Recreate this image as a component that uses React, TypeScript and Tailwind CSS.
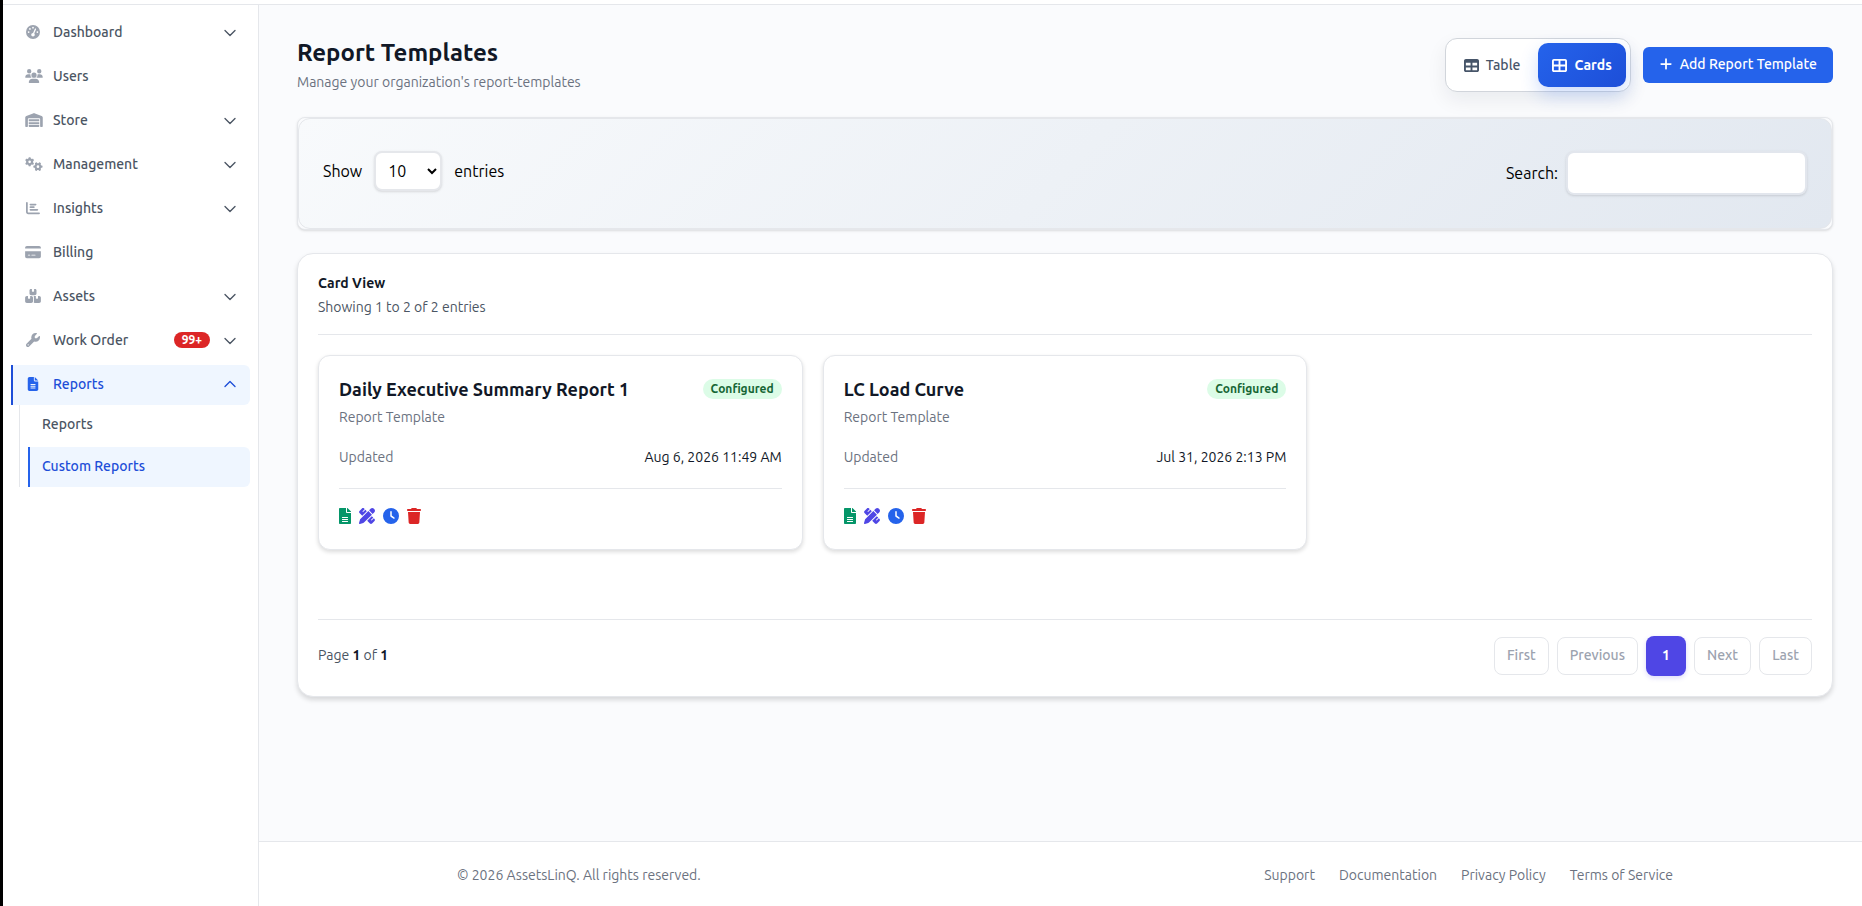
import type { ReactNode } from "react";
import type { IconType } from "react-icons";
import {
  FaBoxesStacked,
  FaChartBar,
  FaClock,
  FaCreditCard,
  FaFileLines,
  FaGaugeHigh,
  FaGears,
  FaPenRuler,
  FaPlus,
  FaTable,
  FaTableCellsLarge,
  FaTrash,
  FaUsers,
  FaWarehouse,
  FaWrench,
} from "react-icons/fa6";
import { ChevronDown, ChevronUp } from "lucide-react";

type NavItem = { label: string; icon: IconType; wide?: boolean; expandable?: boolean; badge?: string };

const navItems: NavItem[] = [
  { label: "Dashboard", icon: FaGaugeHigh, expandable: true },
  { label: "Users", icon: FaUsers, wide: true },
  { label: "Store", icon: FaWarehouse, wide: true, expandable: true },
  { label: "Management", icon: FaGears, wide: true, expandable: true },
  { label: "Insights", icon: FaChartBar, expandable: true },
  { label: "Billing", icon: FaCreditCard },
  { label: "Assets", icon: FaBoxesStacked, expandable: true },
  { label: "Work Order", icon: FaWrench, expandable: true, badge: "99+" },
];

const reports = [
  { title: "Daily Executive Summary Report 1", updated: "Aug 6, 2026 11:49 AM" },
  { title: "LC Load Curve", updated: "Jul 31, 2026 2:13 PM" },
];

function NavRow({ item }: { item: NavItem }) {
  const Icon = item.icon;
  return (
    <button
      type="button"
      className="flex h-10 w-full items-center border-l-2 border-transparent pr-[10px] pb-0.5 pl-3 text-left text-sm font-medium text-[#4b5563]"
    >
      <span className="mr-[10px] flex w-[18px] text-[#9ca3af]">
        <Icon className={item.wide ? "h-[14px] w-[18px] shrink-0" : "h-[14px] w-4 shrink-0"} />
      </span>
      <span className="flex-1">{item.label}</span>
      {item.badge && (
        <span className="mr-[10px] rounded-full bg-[#dc2626] px-2 text-xs leading-4 font-bold text-white">
          {item.badge}
        </span>
      )}
      {item.expandable && <ChevronDown size={20} strokeWidth={1.6} className="mt-0.5" />}
    </button>
  );
}

function Sidebar() {
  return (
    <aside className="w-64 shrink-0 border-r border-[#e5e7eb] bg-white px-2 pt-2">
      <nav className="flex flex-col gap-1">
        {navItems.map((item) => (
          <NavRow key={item.label} item={item} />
        ))}
        <div>
          <button
            type="button"
            className="flex h-10 w-full items-center rounded-r-md border-l-2 border-[#1d4ed8] bg-[#eff6ff] pr-[10px] pb-0.5 pl-3 text-left text-sm font-medium text-[#1d4ed8]"
          >
            <span className="mr-[10px] flex w-[18px] text-[#2563eb]">
              <FaFileLines className="h-[14px] w-4 shrink-0" />
            </span>
            <span className="flex-1">Reports</span>
            <ChevronUp size={20} strokeWidth={1.6} />
          </button>
          <div className="ml-2 flex flex-col gap-1 border-l border-[#e5e7eb] pl-2 text-sm font-medium">
            <a href="#reports" className="flex h-[38px] items-center border-l-2 border-transparent pl-3 text-[#4b5563]">
              Reports
            </a>
            <a
              href="#custom-reports"
              className="flex h-10 items-center rounded-r-md border-l-2 border-[#2563eb] bg-[#eff6ff] pb-0.5 pl-3 text-[#1d4ed8]"
            >
              Custom Reports
            </a>
          </div>
        </div>
      </nav>
    </aside>
  );
}

function PageHeader() {
  return (
    <div className="flex items-center justify-between">
      <div>
        <h1 className="text-2xl leading-8 font-semibold text-[#111827]">Report Templates</h1>
        <p className="mt-0.5 text-sm leading-[22px] text-[#6b7280]">Manage your organization's report-templates</p>
      </div>
      <div className="flex items-center gap-3">
        <div className="flex gap-1 rounded-xl border border-[#d1d5db] bg-white p-1 shadow-[0_8px_20px_rgba(15,23,42,0.07)]">
          <button
            type="button"
            className="flex h-11 items-center gap-[7px] rounded-[10px] px-[14px] text-sm font-medium text-[#475569]"
          >
            <FaTable size={15} />
            Table
          </button>
          <button
            type="button"
            className="flex h-11 items-center gap-[7px] rounded-[10px] bg-linear-135 from-[#2563eb] to-[#1d4ed8] px-[14px] text-sm font-semibold text-white shadow-[0_8px_18px_rgba(37,99,235,0.22)]"
          >
            <FaTableCellsLarge size={15} />
            Cards
          </button>
        </div>
        <button
          type="button"
          className="flex h-9 items-center gap-[7px] rounded-md bg-[#2563eb] px-4 pb-0.5 text-sm font-medium text-white"
        >
          <FaPlus size={14} />
          Add Report Template
        </button>
      </div>
    </div>
  );
}

function FilterBar() {
  return (
    <div className="mt-6 rounded-lg border border-[#e5e7eb] bg-[#fafbfd] shadow-sm">
      <div className="flex items-start justify-between rounded-xl border border-[#e5e7eb] bg-linear-135 from-[#f8fafc] to-[#e2e8f0] px-6 pt-8 pb-[33px] text-base text-black">
        <label className="flex items-center gap-3">
          Show
          <select
            defaultValue="10"
            className="h-10 w-[68px] rounded-lg border-2 border-[#e5e7eb] bg-white pl-2 text-base shadow-sm"
          >
            <option>10</option>
            <option>25</option>
            <option>50</option>
          </select>
          entries
        </label>
        <label className="flex items-center gap-2">
          Search:
          <input
            type="search"
            className="h-11 w-[241px] rounded-lg border-2 border-[#e2e6ed] bg-white px-3 shadow-sm"
          />
        </label>
      </div>
    </div>
  );
}

function IconButton({ label, className, children }: { label: string; className: string; children: ReactNode }) {
  return (
    <button type="button" aria-label={label} className={className}>
      {children}
    </button>
  );
}

function ReportCard({ title, updated }: { title: string; updated: string }) {
  return (
    <article className="rounded-xl border border-[#e5e7eb] bg-white p-5 shadow-[0_2px_4px_rgba(0,0,0,0.14)]">
      <div className="flex items-start justify-between">
        <h3 className="text-lg leading-[26px] font-semibold text-[#111827]">{title}</h3>
        <span className="mt-[3px] rounded-full bg-[#dcfce7] px-2 text-xs leading-5 font-semibold text-[#166534]">
          Configured
        </span>
      </div>
      <p className="mt-[5px] text-sm leading-5 text-[#6b7280]">Report Template</p>
      <div className="mt-5 flex justify-between text-sm leading-5">
        <span className="text-[#6b7280]">Updated</span>
        <span className="text-[#111827]">{updated}</span>
      </div>
      <div className="mt-[21px] flex items-center gap-2 border-t border-[#e5e7eb] pt-[19px] pb-[5px]">
        <IconButton label="View report" className="text-[#059669]">
          <svg viewBox="0 0 384 512" className="h-4 w-3" fill="currentColor">
            <path d="M224 136V0H24C10.700 0 0 10.700 0 24v464c0 13.300 10.700 24 24 24h336c13.300 0 24-10.700 24-24V160H248c-13.200 0-24-10.800-24-24zm64 236c0 6.600-5.400 12-12 12H108c-6.600 0-12-5.400-12-12v-8c0-6.600 5.400-12 12-12h168c6.600 0 12 5.400 12 12v8zm0 64c0 6.600-5.400 12-12 12H108c-6.600 0-12-5.400-12-12v-8c0-6.600 5.400-12 12-12h168c6.600 0 12 5.400 12 12v8zm0-136v8c0 6.600-5.400 12-12 12H108c-6.600 0-12-5.400-12-12v-8c0-6.600 5.400-12 12-12h168c6.600 0 12 5.400 12 12zM384 122v6H256V0h6c6.400 0 12.500 2.500 17 7l98 98c4.500 4.500 7 10.600 7 17z" />
          </svg>
        </IconButton>
        <IconButton label="Design report" className="text-[#4f46e5]">
          <FaPenRuler size={16} />
        </IconButton>
        <IconButton label="Schedule report" className="text-[#2563eb]">
          <FaClock size={16} />
        </IconButton>
        <IconButton label="Delete report" className="text-[#dc2626]">
          <FaTrash className="h-4 w-[14px]" />
        </IconButton>
      </div>
    </article>
  );
}

function PageButton({ children }: { children: ReactNode }) {
  return (
    <button
      type="button"
      disabled
      className="h-[38px] rounded-lg border border-[#e5e7eb] bg-white px-3 pb-0.5 text-sm font-medium text-[#9ca3af]"
    >
      {children}
    </button>
  );
}

function CardView() {
  return (
    <section className="mt-[23px] rounded-2xl border border-[#e5e7eb] bg-white p-5 shadow-[0_3px_5px_rgba(0,0,0,0.14)]">
      <div className="border-b border-[#e5e7eb] pb-[17px]">
        <h2 className="text-sm leading-[18px] font-semibold text-[#111827]">Card View</h2>
        <p className="mt-[5px] text-sm leading-5 text-[#4b5563]">Showing 1 to 2 of 2 entries</p>
      </div>
      <div className="mt-5 grid min-h-[264px] grid-cols-3 items-start gap-5">
        {reports.map((report) => (
          <ReportCard key={report.title} {...report} />
        ))}
      </div>
      <div className="flex items-center justify-between border-t border-[#e5e7eb] pt-4">
        <p className="pb-0.5 text-sm text-[#4b5563]">
          Page <b className="font-semibold text-[#111827]">1</b> of <b className="font-semibold text-[#111827]">1</b>
        </p>
        <div className="flex items-center gap-2">
          <PageButton>First</PageButton>
          <PageButton>Previous</PageButton>
          <button
            type="button"
            aria-current="page"
            className="size-10 rounded-lg bg-[#4f46e5] pb-0.5 text-sm font-semibold text-white shadow-[0_2px_5px_rgba(79,70,229,0.2)]"
          >
            1
          </button>
          <PageButton>Next</PageButton>
          <PageButton>Last</PageButton>
        </div>
      </div>
    </section>
  );
}

function Footer() {
  return (
    <footer className="border-t border-[#e5e7eb] bg-white pl-[9px]">
      <div className="mx-auto flex h-16 max-w-[1216px] items-center justify-between pt-0.5 text-sm text-[#6b7280]">
        <p>© 2026 AssetsLinQ. All rights reserved.</p>
        <nav className="flex gap-6">
          <a href="#support">Support</a>
          <a href="#documentation">Documentation</a>
          <a href="#privacy">Privacy Policy</a>
          <a href="#terms">Terms of Service</a>
        </nav>
      </div>
    </footer>
  );
}

export default function App() {
  return (
    <div className="flex min-h-screen flex-col border-l-3 border-black bg-white font-['Ubuntu','Noto_Sans',sans-serif]">
      <header className="h-[5px] border-b border-[#e5e7eb] bg-white" />
      <div className="flex flex-1">
        <Sidebar />
        <div className="flex min-w-0 flex-1 flex-col bg-[#fafbfd]">
          <main className="flex-1 pt-8 pr-[29px] pl-[38px]">
            <PageHeader />
            <FilterBar />
            <CardView />
          </main>
          <Footer />
        </div>
      </div>
    </div>
  );
}
